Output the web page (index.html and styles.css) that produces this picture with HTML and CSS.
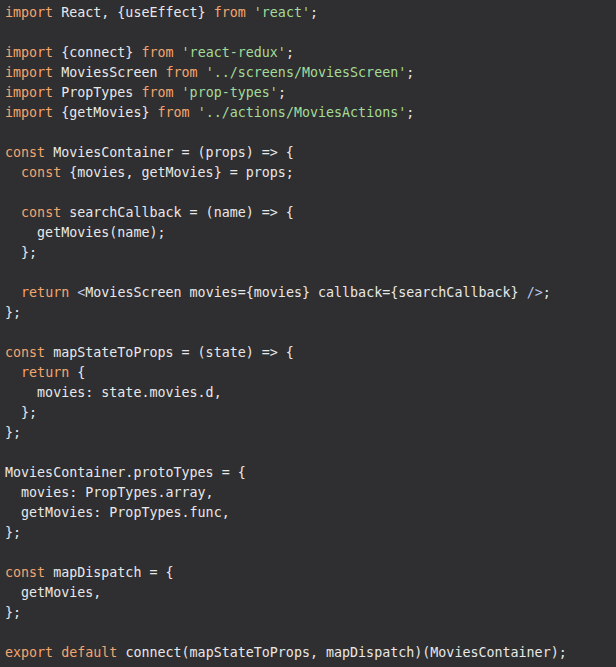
FILE: index.html
```html
<!DOCTYPE html>
<html>
<head>
<meta charset="utf-8">
<link rel="stylesheet" href="styles.css">
</head>
<body>
<pre class="code"><span class="k">import</span> React, {useEffect} <span class="k">from</span> <span class="s">'react'</span>;

<span class="k">import</span> {connect} <span class="k">from</span> <span class="s">'react-redux'</span>;
<span class="k">import</span> MoviesScreen <span class="k">from</span> <span class="s">'../screens/MoviesScreen'</span>;
<span class="k">import</span> PropTypes <span class="k">from</span> <span class="s">'prop-types'</span>;
<span class="k">import</span> {getMovies} <span class="k">from</span> <span class="s">'../actions/MoviesActions'</span>;

<span class="k">const</span> MoviesContainer = (props) =&gt; {
  <span class="k">const</span> {movies, getMovies} = props;

  <span class="k">const</span> searchCallback = (name) =&gt; {
    getMovies(name);
  };

  <span class="k">return</span> <span class="t">&lt;</span>MoviesScreen movies={movies} callback={searchCallback} <span class="t">/&gt;</span>;
};

<span class="k">const</span> mapStateToProps = (state) =&gt; {
  <span class="k">return</span> {
    movies: state.movies.d,
  };
};

MoviesContainer.protoTypes = {
  movies: PropTypes.array,
  getMovies: PropTypes.func,
};

<span class="k">const</span> mapDispatch = {
  getMovies,
};

<span class="k">export</span> <span class="k">default</span> connect(mapStateToProps, mapDispatch)(MoviesContainer);
</pre>
</body>
</html>
```
FILE: styles.css
```css
html, body {
  margin: 0;
  padding: 0;
  background: #2f2e30;
}
.code {
  margin: 0;
  padding: 3px 5px;
  font-family: "DejaVu Sans Mono", "Liberation Mono", monospace;
  font-size: 13.33px;
  line-height: 20px;
  color: #e8e8e8;
  white-space: pre;
}
.k { color: #f4a66e; }
.s { color: #a3dc9a; }
.t { color: #b9c8f0; }
```
